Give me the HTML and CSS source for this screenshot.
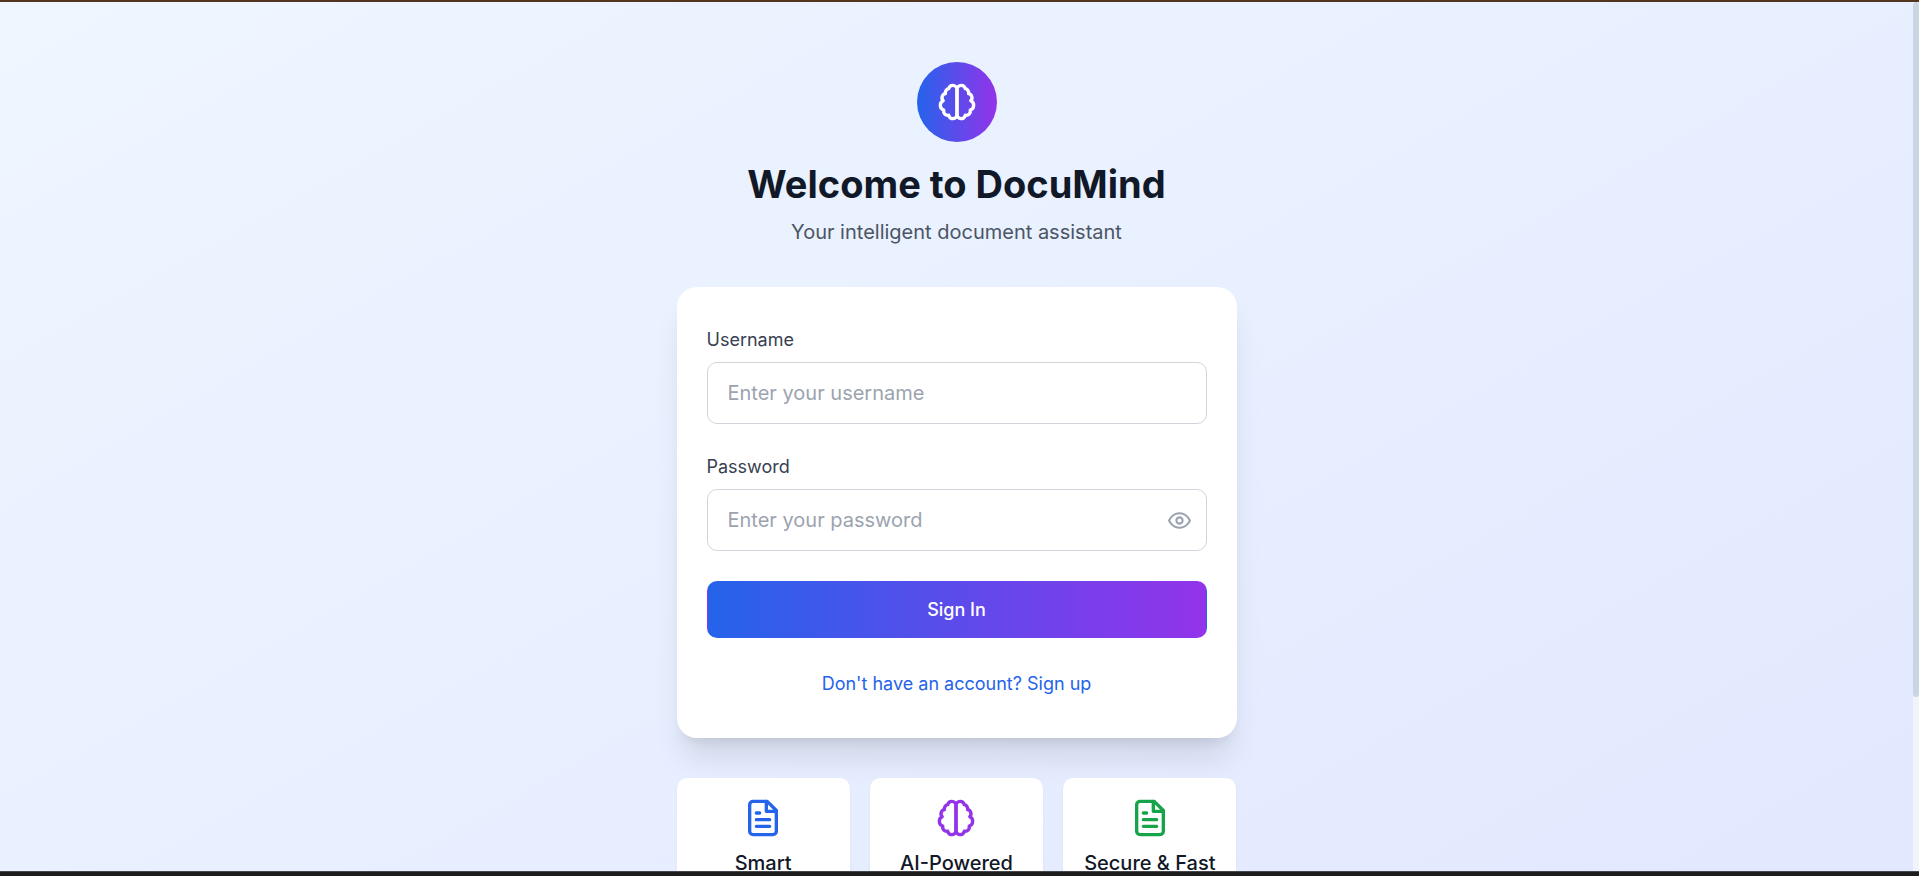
FILE: index.html
```html
<!DOCTYPE html>
<html lang="en">
<head>
<meta charset="utf-8">
<meta name="viewport" content="width=device-width, initial-scale=1">
<title>DocuMind</title>
<link rel="stylesheet" href="styles.css">
</head>
<body>
<svg class="sprite" aria-hidden="true">
  <symbol id="brain" viewBox="0 0 24 24">
    <path d="M9.5 2A2.5 2.5 0 0 1 12 4.5v15a2.5 2.5 0 0 1-4.96.44 2.5 2.5 0 0 1-2.96-3.08 3 3 0 0 1-.34-5.58 2.5 2.5 0 0 1 1.32-4.24 2.5 2.5 0 0 1 1.98-3A2.5 2.5 0 0 1 9.5 2Z"/>
    <path d="M14.5 2A2.5 2.5 0 0 0 12 4.5v15a2.5 2.5 0 0 0 4.96.44 2.5 2.5 0 0 0 2.96-3.08 3 3 0 0 0 .34-5.58 2.5 2.5 0 0 0-1.32-4.24 2.5 2.5 0 0 0-1.98-3A2.5 2.5 0 0 0 14.5 2Z"/>
  </symbol>
  <symbol id="file-text" viewBox="0 0 24 24">
    <path d="M14.5 2H6a2 2 0 0 0-2 2v16a2 2 0 0 0 2 2h12a2 2 0 0 0 2-2V7.5L14.5 2z"/>
    <path d="M14 2v6h6M16 13H8M16 17H8M10 9H8"/>
  </symbol>
  <symbol id="eye" viewBox="0 0 24 24">
    <path d="M2 12s3-7 10-7 10 7 10 7-3 7-10 7-10-7-10-7Z"/>
    <circle cx="12" cy="12" r="3"/>
  </symbol>
</svg>
<div class="edge-top"></div>
<div class="viewport">
  <main class="page">
    <div class="column">
      <header class="intro">
        <div class="logo"><svg class="icon"><use href="#brain"/></svg></div>
        <h1 class="title">Welcome to DocuMind</h1>
        <p class="subtitle">Your intelligent document assistant</p>
      </header>
      <section class="card">
        <form class="form">
          <div class="field">
            <label class="label" for="username">Username</label>
            <input class="input" id="username" type="text" placeholder="Enter your username">
          </div>
          <div class="field">
            <label class="label" for="password">Password</label>
            <div class="input-wrap">
              <input class="input input-password" id="password" type="password" placeholder="Enter your password">
              <button class="reveal" type="button" aria-label="Show password"><svg class="icon-small"><use href="#eye"/></svg></button>
            </div>
          </div>
          <button class="submit" type="submit">Sign In</button>
        </form>
        <div class="switch"><button class="switch-button" type="button">Don't have an account? Sign up</button></div>
      </section>
      <section class="features">
        <article class="feature">
          <svg class="icon blue"><use href="#file-text"/></svg>
          <h2 class="feature-title">Smart</h2>
        </article>
        <article class="feature">
          <svg class="icon purple"><use href="#brain"/></svg>
          <h2 class="feature-title">AI-Powered</h2>
        </article>
        <article class="feature">
          <svg class="icon green"><use href="#file-text"/></svg>
          <h2 class="feature-title">Secure &amp; Fast</h2>
        </article>
      </section>
    </div>
  </main>
  <div class="scroll-track"><div class="scroll-thumb"></div></div>
</div>
<div class="edge-bottom"></div>
</body>
</html>
```
FILE: styles.css
```css
* {
  box-sizing: border-box;
}

body {
  margin: 0;
  height: 100vh;
  display: flex;
  flex-direction: column;
  overflow: hidden;
  font-family: Inter, "Liberation Sans", sans-serif;
  font-size: 20px;
  line-height: 30px;
  color: #111827;
}

h1,
h2,
p {
  margin: 0;
}

button,
input {
  font: inherit;
}

button {
  cursor: pointer;
}

svg {
  display: block;
  fill: none;
  stroke: currentColor;
  stroke-width: 2;
  stroke-linecap: round;
  stroke-linejoin: round;
}

.sprite {
  display: none;
}

.edge-top {
  flex: none;
  height: 2px;
  background: #53341f;
}

.edge-bottom {
  flex: none;
  height: 5px;
  background: #1c1c1c;
  border-top: 1px solid #44464c;
}

.viewport {
  flex: 1;
  min-height: 0;
  display: grid;
  grid-template-columns: 1fr 6px;
  grid-template-rows: 100%;
  overflow: hidden;
}

.page {
  min-height: 125%;
  padding: 60px 20px;
  display: flex;
  justify-content: center;
  background: linear-gradient(to bottom right, #eff6ff, #e0e7ff);
}

.column {
  width: 100%;
  max-width: 560px;
}

.intro {
  display: flex;
  flex-direction: column;
  align-items: center;
  text-align: center;
  margin-bottom: 40px;
}

.logo {
  display: grid;
  place-items: center;
  width: 80px;
  height: 80px;
  margin-bottom: 20px;
  border-radius: 50%;
  color: #fff;
  background: linear-gradient(to right, #2563eb, #9333ea);
}

.icon {
  width: 40px;
  height: 40px;
}

.icon-small {
  width: 25px;
  height: 25px;
}

.title {
  margin-bottom: 10px;
  font-size: 38px;
  line-height: 45px;
  font-weight: 700;
}

.subtitle {
  color: #4b5563;
}

.card {
  padding: 40px 30px;
  border-radius: 20px;
  background: #fff;
  box-shadow: 0 25px 31px -6px rgba(0, 0, 0, 0.1), 0 10px 13px -8px rgba(0, 0, 0, 0.1);
}

.form {
  display: flex;
  flex-direction: column;
  gap: 30px;
}

.label {
  display: block;
  margin-bottom: 10px;
  font-size: 18px;
  line-height: 25px;
  font-weight: 400;
  color: #374151;
}

.input-wrap {
  position: relative;
}

.input {
  display: block;
  width: 100%;
  height: 62px;
  padding: 15px 20px;
  border: 1px solid #d1d5db;
  border-radius: 10px;
  background: #fff;
  color: inherit;
}

.input-password {
  padding-right: 60px;
}

.input::placeholder {
  color: #9ca3af;
  opacity: 1;
}

.reveal {
  position: absolute;
  top: 0;
  bottom: 0;
  right: 0;
  display: flex;
  align-items: center;
  padding: 0 15px;
  border: 0;
  background: none;
  color: #9ca3af;
}

.submit {
  padding: 15px 20px;
  border: 1px solid transparent;
  border-radius: 10px;
  background: linear-gradient(to right, #2563eb, #9333ea);
  color: #fff;
  font-size: 18px;
  line-height: 25px;
  font-weight: 500;
}

.switch {
  margin-top: 30px;
  text-align: center;
}

.switch-button {
  padding: 0;
  border: 0;
  background: none;
  color: #2563eb;
  font-size: 18px;
  line-height: 25px;
  font-weight: 400;
}

.features {
  display: grid;
  grid-template-columns: repeat(3, 1fr);
  gap: 20px;
  margin-top: 40px;
}

.feature {
  display: flex;
  flex-direction: column;
  align-items: center;
  gap: 10px;
  min-height: 250px;
  padding: 20px;
  border-radius: 10px;
  background: #fff;
  box-shadow: 0 1px 3px rgba(0, 0, 0, 0.05);
}

.feature-title {
  font-size: 20px;
  line-height: 30px;
  font-weight: 500;
  text-align: center;
  white-space: nowrap;
}

.blue {
  color: #2563eb;
}

.purple {
  color: #9333ea;
}

.green {
  color: #16a34a;
}

.scroll-track {
  background: #f1f5f9;
}

.scroll-thumb {
  height: 80%;
  border-radius: 4px;
  background: #cbd5e1;
}
```
